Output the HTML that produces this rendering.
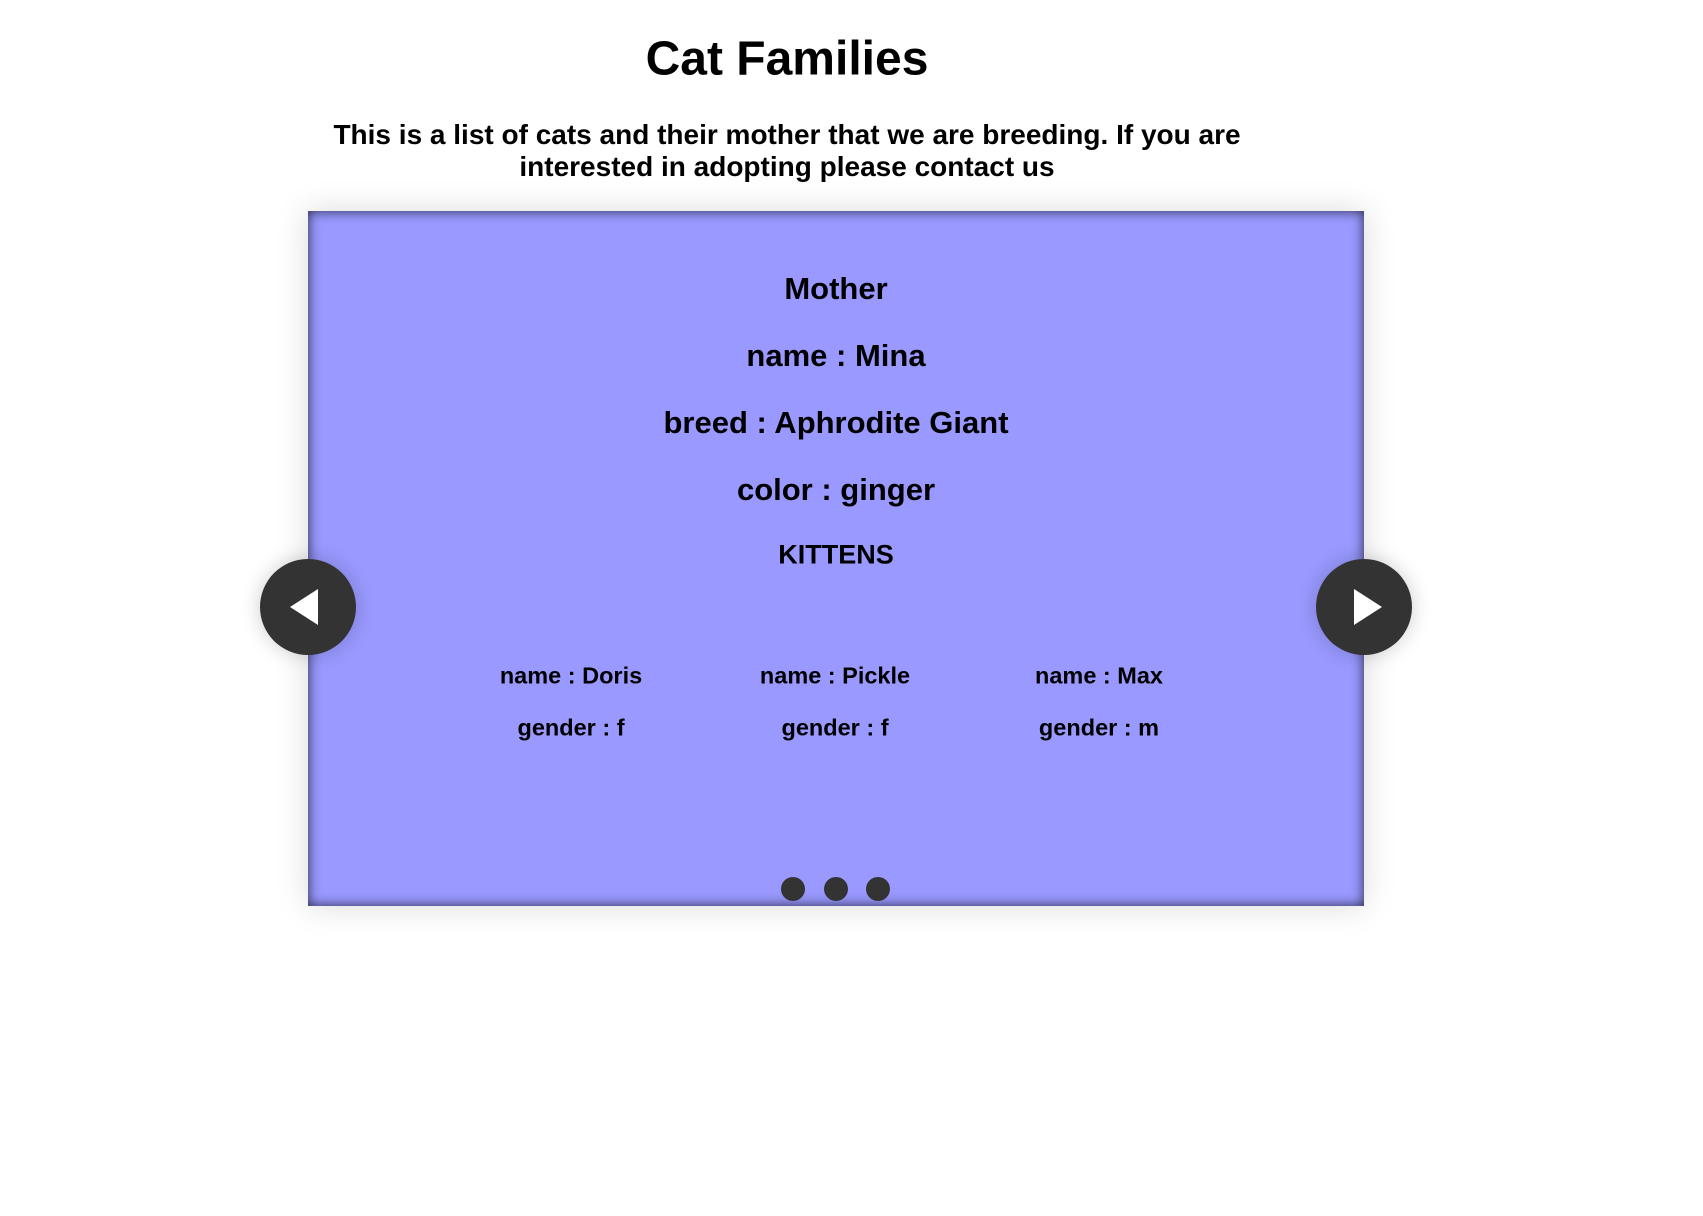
<!DOCTYPE html>
<html><head><meta charset="utf-8"><style>
body{margin:0;width:1703px;height:1216px;background:#fff;font-family:"Liberation Sans",Arial,sans-serif;font-weight:bold;position:relative;overflow:hidden;color:#000}
.c{position:absolute;text-align:center;white-space:nowrap;transform:translate(-50%,-50%)}
.box{position:absolute;left:308px;top:211px;width:1056px;height:695px;background:#9999ff;box-shadow:inset 0 0 12px rgba(0,0,0,.75),0 0 30px rgba(0,0,0,.15)}
.btn{position:absolute;width:96px;height:96px;border-radius:50%;background:#333;top:559px;box-shadow:0 0 20px rgba(0,0,0,.2)}
.dot{position:absolute;width:24px;height:24px;border-radius:50%;background:#333;top:877px}
</style></head><body>
<div class="c" style="left:787px;top:59px;font-size:48px">Cat Families</div>
<div class="c" style="left:787px;top:151px;font-size:28px;line-height:32px">This is a list of cats and their mother that we are breeding. If you are<br>interested in adopting please contact us</div>
<div class="box"></div>
<div class="c" style="left:836px;top:288.5px;font-size:31px">Mother</div>
<div class="c" style="left:836px;top:355.5px;font-size:31px">name : Mina</div>
<div class="c" style="left:836px;top:422.5px;font-size:31px">breed : Aphrodite Giant</div>
<div class="c" style="left:836px;top:489.5px;font-size:31px">color : ginger</div>
<div class="c" style="left:836px;top:555px;font-size:27px">KITTENS</div>
<div class="c" style="left:571px;top:676px;font-size:23.5px">name : Doris</div>
<div class="c" style="left:571px;top:728px;font-size:23.5px">gender : f</div>
<div class="c" style="left:835px;top:676px;font-size:23.5px">name : Pickle</div>
<div class="c" style="left:835px;top:728px;font-size:23.5px">gender : f</div>
<div class="c" style="left:1099px;top:676px;font-size:23.5px">name : Max</div>
<div class="c" style="left:1099px;top:728px;font-size:23.5px">gender : m</div>
<div class="btn" style="left:260px"><svg width="96" height="96"><polygon points="30,48 58,30 58,66" fill="#fff"/></svg></div>
<div class="btn" style="left:1316px"><svg width="96" height="96"><polygon points="66,48 38,30 38,66" fill="#fff"/></svg></div>
<div class="dot" style="left:781px"></div>
<div class="dot" style="left:824px"></div>
<div class="dot" style="left:866px"></div>
</body></html>
